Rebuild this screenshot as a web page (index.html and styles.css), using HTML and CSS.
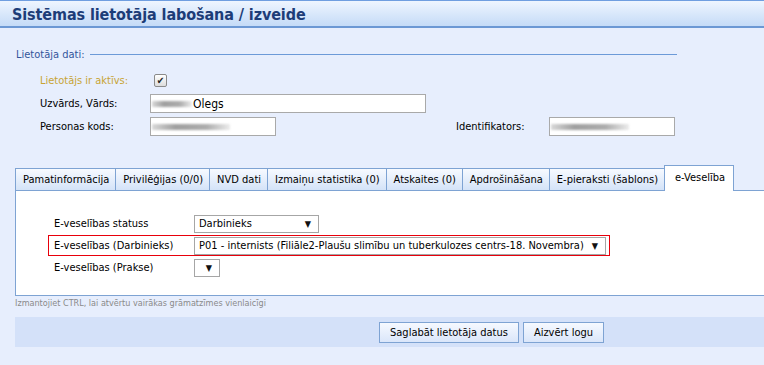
FILE: index.html
```html
<!DOCTYPE html>
<html lang="lv">
<head>
    <meta charset="UTF-8">
    <title>Sistēmas lietotāja labošana / izveide</title>
    <link rel="stylesheet" href="styles.css">
</head>
<body>
    <div class="header">
        <h1>Sistēmas lietotāja labošana / izveide</h1>
    </div>

    <div class="userdata">
        <div class="legend">
            <span>Lietotāja dati:</span>
            <div class="legend-line"></div>
        </div>

        <div class="form-row check-row">
            <label class="active-label">Lietotājs ir aktīvs:</label>
            <span class="checkbox">&#10004;</span>
        </div>
        <div class="form-row">
            <label>Uzvārds, Vārds:</label>
            <div class="field wide"><span class="blur short"></span>Olegs</div>
        </div>
        <div class="form-row">
            <label>Personas kods:</label>
            <div class="field narrow"><span class="blur"></span></div>
            <label class="right-label">Identifikators:</label>
            <div class="field narrow"><span class="blur"></span></div>
        </div>
    </div>

    <div class="tabs">
        <div class="tab">Pamatinformācija</div>
        <div class="tab">Privilēģijas (0/0)</div>
        <div class="tab">NVD dati</div>
        <div class="tab">Izmaiņu statistika (0)</div>
        <div class="tab">Atskaites (0)</div>
        <div class="tab">Apdrošināšana</div>
        <div class="tab">E-pieraksti (šablons)</div>
        <div class="tab current">e-Veselība</div>
    </div>
    <div class="panel">
        <div class="erow">
            <label>E-veselības statuss</label>
            <div class="select" style="width: 125px">Darbinieks<span class="arrow">&#9660;</span></div>
        </div>
        <div class="erow marked">
            <label>E-veselības (Darbinieks)</label>
            <div class="select" style="width: 412px">P01 - internists (Filiāle2-Plaušu slimību un tuberkulozes centrs-18. Novembra)<span class="arrow">&#9660;</span></div>
        </div>
        <div class="erow">
            <label>E-veselības (Prakse)</label>
            <div class="select" style="width: 23px"><span class="arrow">&#9660;</span></div>
        </div>
    </div>
    <div class="hint">Izmantojiet CTRL, lai atvērtu vairākas grāmatzīmes vienlaicīgi</div>

    <div class="buttons">
        <button>Saglabāt lietotāja datus</button>
        <button>Aizvērt logu</button>
    </div>
</body>
</html>
```

FILE: styles.css
```css
html {
    overflow: hidden;
}
body {
    margin: 0;
    background: #e7eefd;
    font-family: "DejaVu Sans Condensed", "DejaVu Sans", sans-serif;
    font-size: 11px;
    color: #000;
}
.header {
    height: 25px;
    border-top: 1px solid #6f9ee0;
    border-bottom: 2px solid #6c98d4;
    background: linear-gradient(#eef5ff, #c5dbf7);
}
.header h1 {
    margin: 0;
    padding: 4px 0 0 12px;
    font-size: 16px;
    font-weight: bold;
    letter-spacing: -0.1px;
    color: #1d3d78;
}
.userdata {
    padding: 20px 0 0 16px;
}
.legend {
    display: flex;
    align-items: center;
    color: #33559b;
}
.legend-line {
    width: 587px;
    height: 1px;
    margin-left: 5px;
    background: #6c9ad8;
}
.form-row {
    display: flex;
    align-items: center;
    height: 19px;
    margin-top: 4px;
    padding-left: 24px;
}
.form-row label {
    width: 110px;
}
.check-row {
    margin-top: 12px;
    margin-bottom: 7px;
    height: 14px;
}
.active-label {
    color: #c8a434;
}
.checkbox {
    width: 11px;
    height: 11px;
    margin-left: 4px;
    border: 1px solid #8a8a8a;
    border-radius: 2px;
    background: linear-gradient(#fff, #dcdcdc);
    font-size: 10px;
    line-height: 11px;
    text-align: center;
    color: #222;
}
.field {
    display: flex;
    align-items: center;
    box-sizing: border-box;
    height: 19px;
    border: 1px solid #a9a9a9;
    background: #fff;
    padding-left: 1px;
    font-size: 12px;
}
.field.wide {
    width: 276px;
}
.field.narrow {
    width: 126px;
}
.blur {
    display: inline-block;
    width: 78px;
    height: 6px;
    background: linear-gradient(90deg, #d0d0d0, #888 30%, #999 70%, #e8e8e8);
    filter: blur(1.2px);
    opacity: 0.8;
}
.blur.short {
    width: 40px;
    margin-right: 1px;
}
.right-label {
    margin-left: 180px;
    width: 93px !important;
}
.tabs {
    display: flex;
    align-items: flex-end;
    margin: 28px 0 0 15px;
    height: 26px;
}
.tab {
    box-sizing: border-box;
    height: 22px;
    padding: 0 6px 0 7px;
    line-height: 21px;
    border: 1px solid #7ea3d3;
    border-right: none;
    border-bottom: none;
    background: linear-gradient(#f7faff, #d4e3f8);
    white-space: nowrap;
}
.tab.current {
    height: 26px;
    padding: 0 8px 0 10px;
    border-right: 1px solid #7ea3d3;
    background: #fff;
    line-height: 24px;
    position: relative;
    top: 1px;
}
.panel {
    box-sizing: border-box;
    height: 106px;
    margin-left: 15px;
    padding: 22px 0 0 32px;
    border: 1px solid #7ea3d3;
    border-right: none;
    background: #fff;
}
.erow {
    display: flex;
    align-items: center;
    width: 555px;
    height: 19px;
    margin-bottom: 1px;
    padding-left: 5px;
    border: 1px solid transparent;
}
.erow.marked {
    border-color: #e8000b;
}
.erow label {
    width: 140px;
}
.select {
    position: relative;
    box-sizing: border-box;
    height: 18px;
    padding: 0 20px 0 4px;
    line-height: 16px;
    border: 1px solid #a6a6a6;
    background: #fff;
    white-space: nowrap;
    overflow: hidden;
}
.arrow {
    position: absolute;
    right: 7px;
    top: 0;
    font-size: 9px;
    color: #111;
}
.hint {
    margin: 2px 0 0 15px;
    font-size: 9px;
    color: #8a8a8a;
}
.buttons {
    display: flex;
    gap: 4px;
    align-items: center;
    height: 30px;
    margin: 9px 0 0 15px;
    padding-left: 364px;
    background: #d4e1f9;
}
button {
    height: 21px;
    padding: 0 10px;
    border: 1px solid #7ea3d3;
    background: linear-gradient(#f6f9ff, #dae6fa);
    font-family: inherit;
    font-size: 11px;
    color: #000;
}
```
